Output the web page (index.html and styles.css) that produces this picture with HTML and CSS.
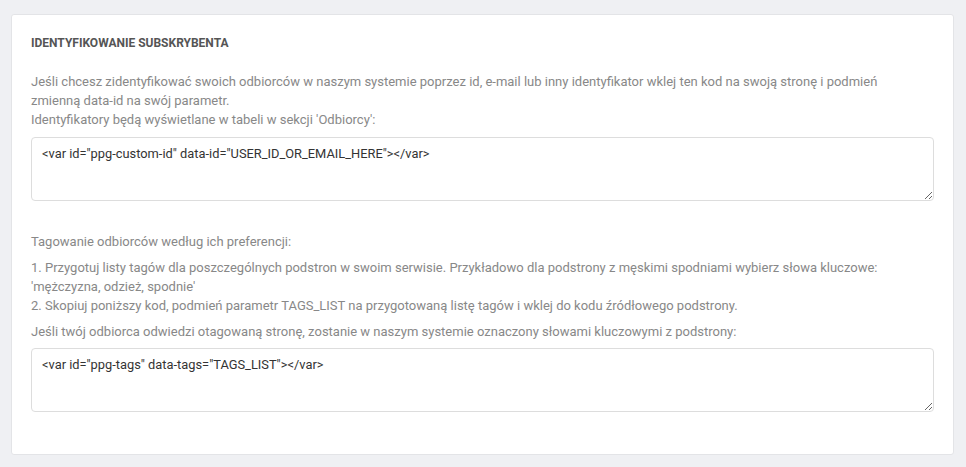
FILE: index.html
```html
<!DOCTYPE html>
<html lang="pl">
<head>
<meta charset="utf-8">
<link rel="stylesheet" href="styles.css">
</head>
<body>
<div class="page">
  <section class="card">
    <h2 class="title">IDENTYFIKOWANIE SUBSKRYBENTA</h2>
    <p class="text lead">Jeśli chcesz zidentyfikować swoich odbiorców w naszym systemie poprzez id, e-mail lub inny identyfikator wklej ten kod na swoją stronę i podmień zmienną data-id na swój parametr.<br>Identyfikatory będą wyświetlane w tabeli w sekcji 'Odbiorcy':</p>
    <textarea class="code" spellcheck="false">&lt;var id="ppg-custom-id" data-id="USER_ID_OR_EMAIL_HERE"&gt;&lt;/var&gt;</textarea>

    <p class="text first">Tagowanie odbiorców według ich preferencji:</p>
    <p class="text">1. Przygotuj listy tagów dla poszczególnych podstron w swoim serwisie. Przykładowo dla podstrony z męskimi spodniami wybierz słowa kluczowe: 'mężczyzna, odzież, spodnie'<br>2. Skopiuj poniższy kod, podmień parametr TAGS_LIST na przygotowaną listę tagów i wklej do kodu źródłowego podstrony.</p>
    <p class="text">Jeśli twój odbiorca odwiedzi otagowaną stronę, zostanie w naszym systemie oznaczony słowami kluczowymi z podstrony:</p>
    <textarea class="code" spellcheck="false">&lt;var id="ppg-tags" data-tags="TAGS_LIST"&gt;&lt;/var&gt;</textarea>
  </section>
</div>
</body>
</html>
```

FILE: styles.css
```css
* { box-sizing: border-box; }
html, body { margin: 0; padding: 0; }
body {
  background: #eff0f3;
  font-family: Roboto, "Liberation Sans", Arial, sans-serif;
  width: 966px;
  height: 467px;
  overflow: hidden;
}
.page {
  padding: 14px 12px 0 11px;
}
.card {
  background: #fff;
  border: 1px solid #e3e4e7;
  border-radius: 3px;
  padding: 20px 19px 41px 19px;
  height: 441px;
}
.title {
  margin: 0 0 20px 0;
  font-size: 12px;
  line-height: 17px;
  font-weight: 700;
  color: #555;
}
.text {
  margin: 0 0 7px 0;
  max-width: 885px;
  font-size: 13px;
  line-height: 19px;
  color: #888;
}
.text.lead {
  margin-bottom: 8px;
}
.text.first {
  margin-top: 31px;
}
.code {
  display: block;
  width: 903px;
  height: 64px;
  margin: 0;
  padding: 7px 10px;
  border: 1px solid #ddd;
  border-radius: 4px;
  font-family: Roboto, "Liberation Sans", Arial, sans-serif;
  font-size: 12.85px;
  line-height: 17px;
  color: #333;
  background: #fff;
  resize: vertical;
  outline: none;
}
```
